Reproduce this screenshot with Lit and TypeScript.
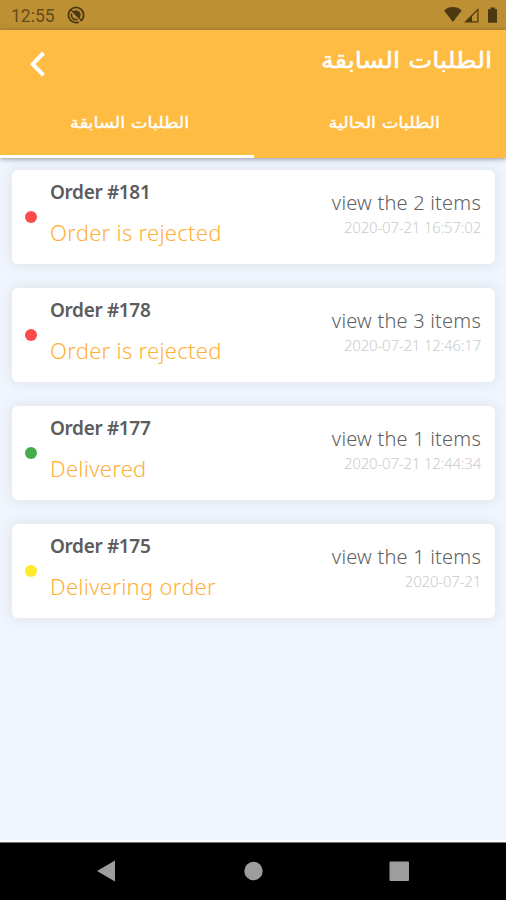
import { LitElement, html, css, svg } from "lit";
import { customElement, property } from "lit/decorators.js";

interface Order {
  id: number;
  status: string;
  tone: "rejected" | "delivered" | "delivering";
  items: number;
  date: string;
}

const orders: Order[] = [
  { id: 181, status: "Order is rejected", tone: "rejected", items: 2, date: "2020-07-21 16:57:02" },
  { id: 178, status: "Order is rejected", tone: "rejected", items: 3, date: "2020-07-21 12:46:17" },
  { id: 177, status: "Delivered", tone: "delivered", items: 1, date: "2020-07-21 12:44:34" },
  { id: 175, status: "Delivering order", tone: "delivering", items: 1, date: "2020-07-21" },
];

@customElement("order-card")
export class OrderCard extends LitElement {
  @property({ attribute: false }) order!: Order;

  static styles = css`
    :host {
      display: flex;
      box-sizing: border-box;
      height: 94px;
      padding: 0 14px 0 13px;
      background: #fff;
      border-radius: 6px;
      box-shadow: 0 0 12px 3px rgba(150, 160, 150, 0.16);
      font-family: "Noto Sans", "Open Sans", sans-serif;
      white-space: nowrap;
    }
    .dot {
      width: 12px;
      height: 12px;
      margin: 41px 13px 0 0;
      border-radius: 50%;
    }
    .rejected { background: #fc4b4b; }
    .delivered { background: #46ac4b; }
    .delivering { background: #ffea2e; }
    .main { flex: 1; }
    .title {
      margin-top: 8px;
      font-size: 19px;
      line-height: 28px;
      font-weight: 600;
      letter-spacing: -0.35px;
      color: #5c5c5e;
    }
    .status {
      margin-top: 10px;
      font-size: 22px;
      line-height: 32px;
      font-weight: 300;
      letter-spacing: 0.28px;
      color: #ffaf38;
    }
    .side { text-align: right; }
    .items {
      margin-top: 19px;
      font-size: 20px;
      line-height: 28px;
      font-weight: 300;
      letter-spacing: 0.2px;
      color: #606060;
    }
    .date {
      font-size: 15px;
      line-height: 20px;
      font-weight: 300;
      letter-spacing: -0.2px;
      color: #cbcbcb;
    }
  `;

  render() {
    const o = this.order;
    return html`
      <div class="dot ${o.tone}"></div>
      <div class="main">
        <div class="title">Order #${o.id}</div>
        <div class="status">${o.status}</div>
      </div>
      <div class="side">
        <div class="items">view the ${o.items} items</div>
        <div class="date">${o.date}</div>
      </div>
    `;
  }
}

const syncIcon = svg`
  <circle cx="9" cy="9" r="7.6" fill="none" stroke="currentColor" stroke-width="1.8" stroke-dasharray="7 2 38.8"/>
  <path d="M5.6 5.6A4.8 4.8 0 0 1 13.4 10.6L12.4 12.4Z" fill="currentColor"/>
  <path d="M4.6 7.6A4.6 4.6 0 0 0 10.6 13.3" fill="none" stroke="currentColor" stroke-width="1.6"/>
  <path d="M4 4 14.5 14.5" stroke="currentColor" stroke-width="1.2"/>`;

@customElement("app-root")
export class AppRoot extends LitElement {
  static styles = css`
    :host {
      display: flex;
      flex-direction: column;
      width: 506px;
      height: 900px;
      overflow: hidden;
      background: #f1f6fe;
    }
    svg { display: block; }
    .statusbar {
      display: flex;
      align-items: center;
      box-sizing: border-box;
      height: 30px;
      padding: 0 8px 0 11px;
      background: #be9034;
      color: #4d3911;
    }
    .clock {
      width: 44px;
      font: 400 17.5px/30px Roboto, sans-serif;
      padding-top: 2px;
      color: #654b1a;
    }
    .sync { margin-left: 12px; }
    .signals { margin-left: auto; }
    .header {
      position: relative;
      height: 128px;
      background: #ffbc42;
      color: #fff;
      box-shadow: 0 1px 5px rgba(60, 60, 80, 0.55);
      font-family: "DejaVu Sans", sans-serif;
      -webkit-text-stroke: 0.5px #fff;
      white-space: nowrap;
    }
    .bar {
      display: flex;
      justify-content: space-between;
      height: 60px;
      padding: 0 14px 0 28px;
    }
    .back { margin-top: 20px; }
    .heading {
      font-size: 23px;
      font-weight: 400;
      line-height: 61px;
      margin: 0;
      transform: scaleX(1.11);
      transform-origin: right;
    }
    .tabs { display: flex; height: 68px; }
    .tab {
      width: 252px;
      box-sizing: border-box;
      padding-top: 18px;
      text-align: center;
      font-size: 16px;
      line-height: 30px;
      border-bottom: 3px solid transparent;
      -webkit-text-stroke-width: 0.35px;
    }
    .label {
      display: inline-block;
      transform: scaleX(1.11);
    }
    .past { width: 254px; padding-left: 6px; }
    .current { padding-left: 8px; }
    .active { border-bottom-color: #fff; }
    .list {
      flex: 1;
      display: flex;
      flex-direction: column;
      gap: 24px;
      padding: 12px 11px 0 12px;
    }
    .nav {
      height: 58px;
      box-sizing: border-box;
      background: #000;
      border-top: 1px solid #777;
      box-shadow: 0 -2px 0 #fafcff;
    }
  `;

  render() {
    return html`
      <div class="statusbar">
        <div class="clock">12:55</div>
        <svg class="sync" width="18" height="18" viewBox="0 0 18 18">${syncIcon}</svg>
        <svg class="signals" width="54" height="18" viewBox="0 0 54 18" fill="currentColor">
          <path d="M0 4.5C5-.1 12.8-.1 17.8 4.5L8.9 16Z" />
          <path fill-rule="evenodd" d="M20 16.5 34.5 2V16.5ZM28 15.2H33.3V5L28 10.3Z" />
          <path d="M44 3.2H46.5V1.5H51V3.2H53V16.7H44Z" />
        </svg>
      </div>
      <header class="header">
        <div class="bar">
          <svg class="back" width="20" height="28" viewBox="0 0 20 28">
            <path d="M15.5 3 4.7 14.2 15.5 25.2" fill="none" stroke="#fff" stroke-width="4" />
          </svg>
          <h1 class="heading" dir="rtl" lang="ar">الطلبات السابقة</h1>
        </div>
        <div class="tabs">
          <div class="tab past active"><span class="label" dir="rtl" lang="ar">الطلبات السابقة</span></div>
          <div class="tab current"><span class="label" dir="rtl" lang="ar">الطلبات الحالية</span></div>
        </div>
      </header>
      <main class="list">${orders.map((o) => html`<order-card .order=${o}></order-card>`)}</main>
      <nav class="nav">
        <svg width="506" height="57" viewBox="0 0 506 57" fill="#9d9d9d">
          <path d="M97 28 115 17.5V38.5Z" />
          <circle cx="253.5" cy="28" r="9.2" />
          <rect x="389.5" y="18.5" width="19.5" height="19.5" rx="1" />
        </svg>
      </nav>
    `;
  }
}
